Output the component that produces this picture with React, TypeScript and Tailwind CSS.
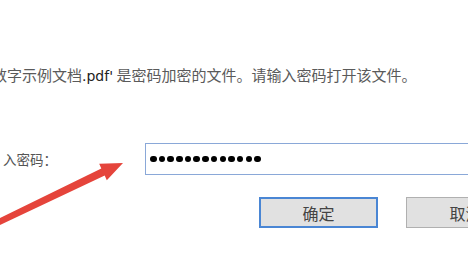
import React from "react";

const cjk = { fontFamily: '"Noto Sans CJK SC", "Noto Sans", sans-serif' };

export default function App() {
  const dots = Array.from({ length: 13 });
  return (
    <div className="relative w-[468px] h-[264px] overflow-hidden bg-white" style={cjk}>
      <div className="pt-[65px] -ml-[8px] whitespace-nowrap text-[15px] leading-[20px] text-[#5a5a5a]">
        数字示例文档<span className="text-[#222]" style={{ fontFamily: '"DejaVu Sans", sans-serif', fontSize: "14px" }}>.pdf'</span> 是密码加密的文件。请输入密码打开该文件。
      </div>
      <div className="mt-[57px] flex items-center w-[600px]">
        <div className="ml-[3px] w-[142px] shrink-0 text-[13.5px] leading-[18px] text-[#555]">入密码：</div>
        <div className="w-[340px] h-[32px] shrink-0 border border-[#8aa8d8] bg-white flex items-center pl-[4px] gap-[2.2px]">
          {dots.map((_, i) => (
            <span key={i} className="w-[6.5px] h-[6.5px] rounded-full bg-black shrink-0" />
          ))}
        </div>
      </div>
      <div className="mt-[22px] flex gap-[28px] ml-[259px] w-[400px]">
        <div className="w-[119px] h-[31px] shrink-0 border-2 border-[#4a86d4] bg-[#e1e1e1] flex items-center justify-center text-[16px] text-[#444]">
          确定
        </div>
        <div className="w-[119px] h-[31px] shrink-0 border border-[#b0b0b0] bg-[#e1e1e1] flex items-center justify-center text-[16px] text-[#444]">
          取消
        </div>
      </div>
      <svg className="absolute left-0 top-0" width="468" height="264" viewBox="0 0 468 264">
        <polygon
          points="-2,219 101.3,168.4 99.2,163.8 123,163 106.8,180.2 104.7,175.6 -2,226"
          fill="#e5443b"
        />
      </svg>
    </div>
  );
}
